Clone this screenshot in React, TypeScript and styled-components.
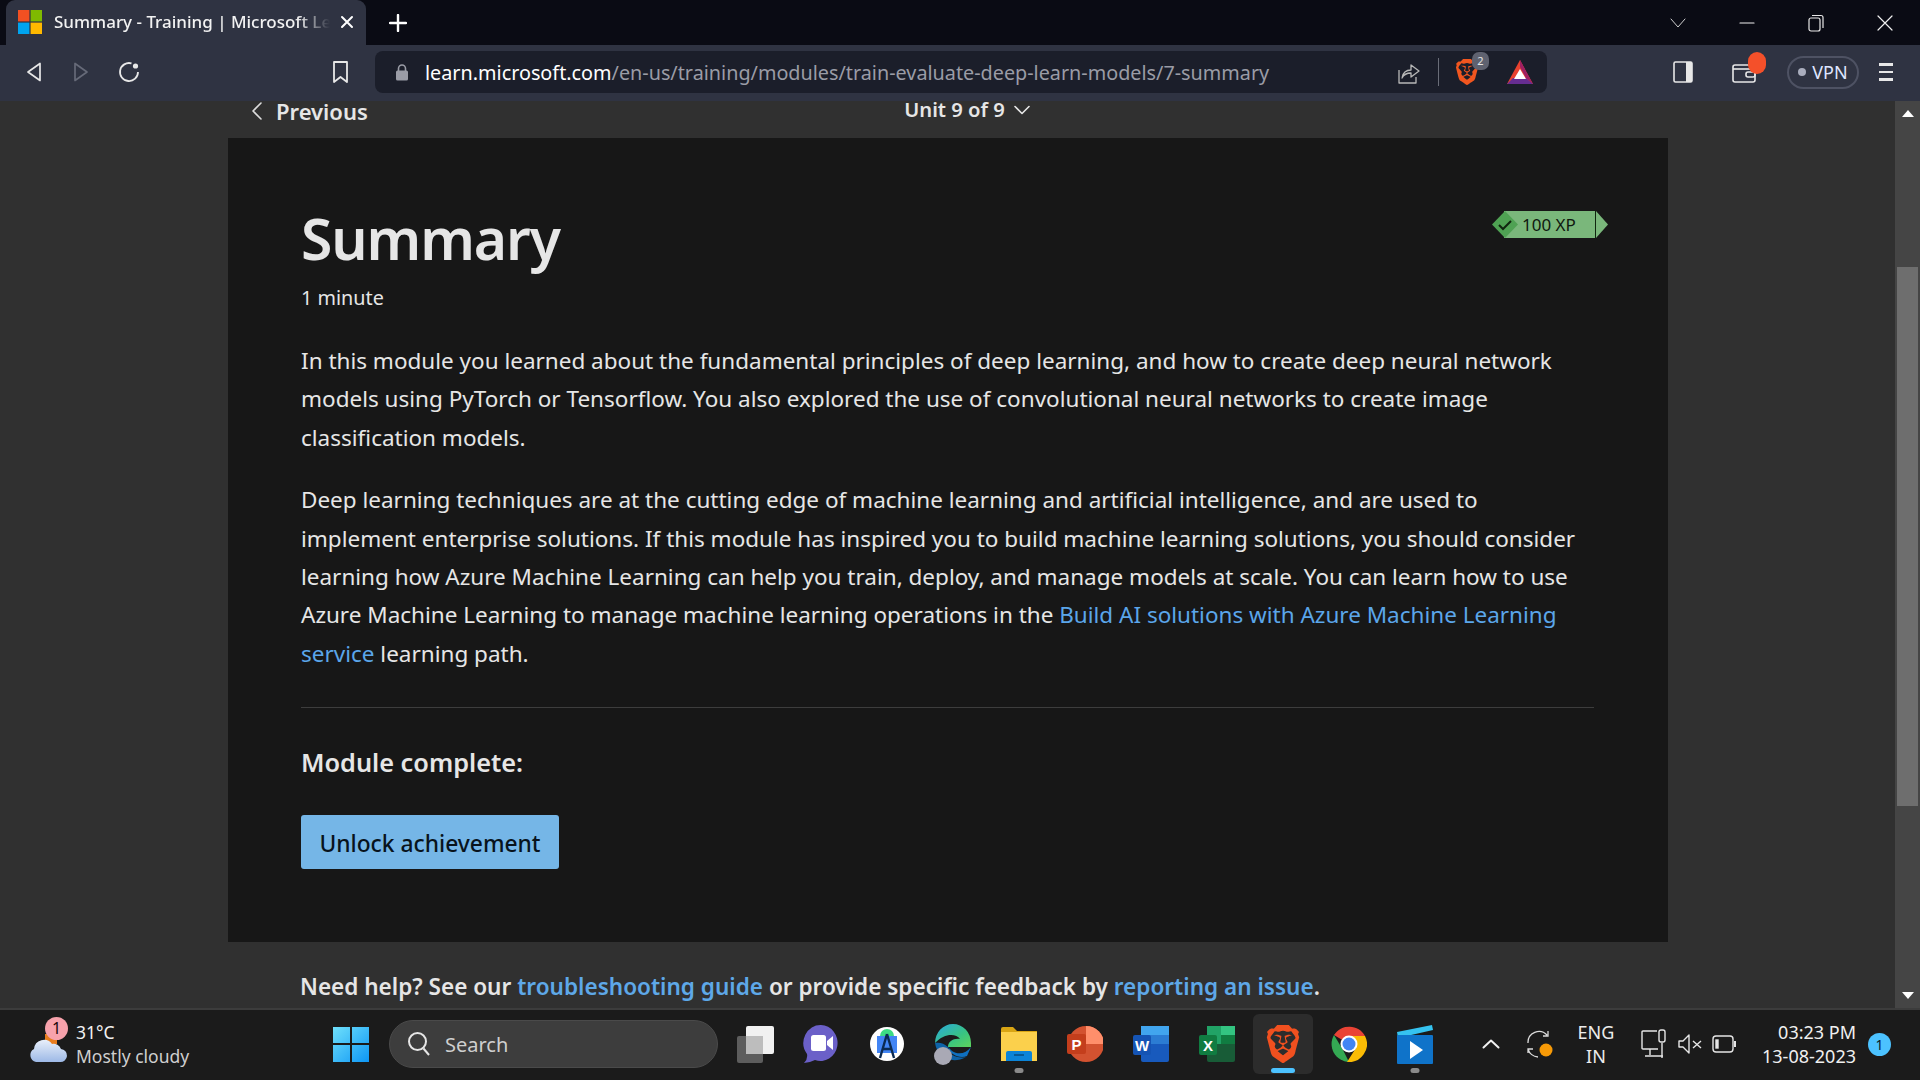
import { createGlobalStyle } from "styled-components";
import styled from "styled-components";
import { SiBrave } from "react-icons/si";

const GlobalStyle = createGlobalStyle`
	html, body {
		margin: 0;
		padding: 0;
		height: 100%;
		overflow: hidden;
		background: #303030;
	}
	* {
		box-sizing: border-box;
	}
`;

const FONT = `"Noto Sans", "Open Sans", "Liberation Sans", sans-serif`;

function Squares({ size, colors }: { size: number; colors: string[] }) {
	return (
		<svg width={size} height={size} viewBox="0 0 24 24">
			<rect x="0" y="0" width="11.4" height="11.4" fill={colors[0]} />
			<rect x="12.6" y="0" width="11.4" height="11.4" fill={colors[1]} />
			<rect x="0" y="12.6" width="11.4" height="11.4" fill={colors[2]} />
			<rect x="12.6" y="12.6" width="11.4" height="11.4" fill={colors[3]} />
		</svg>
	);
}

function Stroke({ w, h, d, color = "#e8e8e8", sw = 1.6, box }: { w: number; h: number; d: string; color?: string; sw?: number; box?: string }) {
	return (
		<svg width={w} height={h} viewBox={box ?? `0 0 ${w} ${h}`} fill="none" stroke={color} strokeWidth={sw} strokeLinejoin="round" strokeLinecap="round">
			<path d={d} />
		</svg>
	);
}

function App() {
	return (
		<Screen>
			<GlobalStyle />
			<TabStrip>
				<Tab>
					<Squares size={24} colors={["#f25022", "#7fba00", "#00a4ef", "#ffb900"]} />
					<TabTitle>Summary - Training | Microsoft Learn</TabTitle>
					<Stroke w={14} h={14} d="M2 2 L12 12 M12 2 L2 12" color="#fff" sw={2} />
				</Tab>
				<NewTab>
					<Stroke w={18} h={18} d="M9 1 V17 M1 9 H17" color="#fff" sw={2.4} />
				</NewTab>
				<WindowControls>
					<WindowButton>
						<Stroke w={16} h={10} d="M1 1 L8 9 L15 1" color="#cfcfcf" sw={1} />
					</WindowButton>
					<WindowButton>
						<Stroke w={16} h={4} d="M1 2 H15" color="#f0f0f0" sw={1.2} />
					</WindowButton>
					<WindowButton>
						<svg width="16" height="18" viewBox="0 0 16 18" fill="none" stroke="#e8e8e8" strokeWidth="1.2">
							<rect x="1" y="4" width="11" height="13" rx="2" />
							<path d="M4 1.5 H13 Q15 1.5 15 3.5 V14" />
						</svg>
					</WindowButton>
					<WindowButton>
						<Stroke w={16} h={16} d="M1 1 L15 15 M15 1 L1 15" color="#f0f0f0" sw={1.2} />
					</WindowButton>
				</WindowControls>
			</TabStrip>

			<Toolbar>
				<NavButton width={47}>
					<svg width="16" height="20" viewBox="0 0 16 20" fill="none" stroke="#e8e8e8" strokeWidth="1.7" strokeLinejoin="round">
						<path d="M14 1.5 V18.5 L2 10 Z" />
					</svg>
				</NavButton>
				<NavButton width={47}>
					<svg width="16" height="20" viewBox="0 0 16 20" fill="none" stroke="#666a78" strokeWidth="1.7" strokeLinejoin="round">
						<path d="M2 1.5 V18.5 L14 10 Z" />
					</svg>
				</NavButton>
				<NavButton width={50}>
					<svg width="22" height="22" viewBox="0 0 22 22" fill="none" stroke="#e8e8e8" strokeWidth="1.8">
						<path d="M13.5 2.4 A9 9 0 1 0 20 11" />
						<circle cx="17.5" cy="5" r="2.6" fill="#e8e8e8" stroke="none" />
					</svg>
				</NavButton>
				<BookmarkSlot>
					<svg width="17" height="24" viewBox="0 0 17 24" fill="none" stroke="#e8e8e8" strokeWidth="1.8" strokeLinejoin="round">
						<path d="M2 2 H15 V22 L8.5 17 L2 22 Z" />
					</svg>
				</BookmarkSlot>
				<UrlBar>
					<svg width="14" height="18" viewBox="0 0 14 18">
						<path d="M3.5 8 V5.5 A3.5 3.5 0 0 1 10.5 5.5 V8" fill="none" stroke="#9a9ca6" strokeWidth="1.6" />
						<rect x="1" y="7.5" width="12" height="10" rx="1.5" fill="#9a9ca6" />
					</svg>
					<UrlText>
						learn.microsoft.com<UrlPath>/en-us/training/modules/train-evaluate-deep-learn-models/7-summary</UrlPath>
					</UrlText>
					<UrlIcons>
						<svg width="24" height="26" viewBox="0 0 24 26" fill="none" stroke="#b8b8b8" strokeWidth="1.3" strokeLinejoin="round">
							<path d="M3 11 V24 H20 V18" />
							<path d="M6 19 C7 13 11 11 15 11 V6 L23 12 L15 18 V14 C11 14 8 15 6 19 Z" />
						</svg>
						<UrlDivider />
						<ShieldSlot>
							<SiBrave size={26} color="#f1561f" />
							<ShieldCount>2</ShieldCount>
						</ShieldSlot>
						<svg width="28" height="28" viewBox="0 0 28 28">
							<path d="M14 2 L27 26 H1 Z" fill="#e8412f" />
							<path d="M14 2 L27 26 L20 20 L14 9 Z" fill="#9e1f63" />
							<path d="M1 26 L7 20 H20 L27 26 Z" fill="#662d91" />
							<path d="M14 11 L20 21 H8 Z" fill="#fff" />
						</svg>
					</UrlIcons>
				</UrlBar>
				<ToolbarRight>
					<svg width="20" height="22" viewBox="0 0 20 22">
						<rect x="1" y="1" width="18" height="20" rx="1.5" fill="none" stroke="#e8e8e8" strokeWidth="1.6" />
						<rect x="13" y="1" width="6" height="20" fill="#e8e8e8" />
					</svg>
					<WalletSlot>
						<svg width="24" height="22" viewBox="0 0 24 22" fill="none" stroke="#e8e8e8" strokeWidth="1.6">
							<rect x="1" y="4" width="22" height="17" rx="2" />
							<path d="M1 8 H23" />
							<rect x="14" y="11" width="9" height="5" rx="2" />
						</svg>
						<WalletDot />
					</WalletSlot>
					<VpnPill>
						<VpnDot />
						VPN
					</VpnPill>
					<Hamburger>
						<span />
						<span />
						<span />
					</Hamburger>
				</ToolbarRight>
			</Toolbar>

			<Viewport>
				<Page>
					<UnitNav>
						<PrevLink>
							<Stroke w={12} h={18} d="M10 1 L2 9 L10 17" color="#dcdcdc" sw={1.6} />
							Previous
						</PrevLink>
						<UnitLabel>
							Unit 9 of 9
							<Stroke w={16} h={10} d="M1 1.5 L8 8.5 L15 1.5" color="#e6e6e6" sw={1.6} />
						</UnitLabel>
					</UnitNav>
					<Card>
						<CardHeader>
							<div>
								<Title>Summary</Title>
								<Duration>1 minute</Duration>
							</div>
							<XpBadge>
								<XpCheck>
									<svg width="28" height="27" viewBox="0 0 28 27">
										<path d="M12 0 H28 V27 H12 Z" fill="#7ab77b" />
										<path d="M13 0 L26 13.5 L13 27 L0 13.5 Z" fill="#4fa253" />
										<path d="M7 14 L11 18 L19 10" fill="none" stroke="#10260f" strokeWidth="2" />
									</svg>
								</XpCheck>
								<XpLabel>100 XP</XpLabel>
								<XpEnd>
									<svg width="12" height="27" viewBox="0 0 12 27">
										<path d="M0 0 L12 13.5 L0 27 Z" fill="#7ab77b" />
									</svg>
								</XpEnd>
							</XpBadge>
						</CardHeader>
						<Paragraph>
							In this module you learned about the fundamental principles of deep learning, and how to create deep neural network models using PyTorch or Tensorflow. You also explored the use of convolutional neural networks to create image classification models.
						</Paragraph>
						<Paragraph>
							Deep learning techniques are at the cutting edge of machine learning and artificial intelligence, and are used to implement enterprise solutions. If this module has inspired you to build machine learning solutions, you should consider learning how Azure Machine Learning can help you train, deploy, and manage models at scale. You can learn how to use Azure Machine Learning to manage machine learning operations in the{" "}
							<BodyLink>Build AI solutions with Azure Machine Learning service</BodyLink> learning path.
						</Paragraph>
						<Rule />
						<CompleteTitle>Module complete:</CompleteTitle>
						<UnlockButton>Unlock achievement</UnlockButton>
					</Card>
					<HelpLine>
						Need help? See our <HelpLink>troubleshooting guide</HelpLink> or provide specific feedback by <HelpLink>reporting an issue</HelpLink>.
					</HelpLine>
				</Page>
				<Scrollbar>
					<ScrollArrow>
						<svg width="12" height="7" viewBox="0 0 12 7">
							<path d="M0 7 L6 0 L12 7 Z" fill="#fff" />
						</svg>
					</ScrollArrow>
					<ScrollTrack>
						<ScrollThumb />
					</ScrollTrack>
					<ScrollArrow>
						<svg width="12" height="7" viewBox="0 0 12 7">
							<path d="M0 0 L6 7 L12 0 Z" fill="#fff" />
						</svg>
					</ScrollArrow>
				</Scrollbar>
			</Viewport>

			<Taskbar>
				<Weather>
					<WeatherIcon>
						<svg width="40" height="34" viewBox="0 0 40 34">
							<defs>
								<linearGradient id="cloud" x1="0" y1="0" x2="0" y2="1">
									<stop offset="0" stopColor="#e8effa" />
									<stop offset="1" stopColor="#9db9e6" />
								</linearGradient>
							</defs>
							<rect x="17" y="4" width="12" height="10" fill="#e87d1e" />
							<path d="M8 32 A7 7 0 0 1 6 19 A10 10 0 0 1 24 14 A8 8 0 0 1 33 19 A6.5 6.5 0 0 1 32 32 Z" fill="url(#cloud)" />
						</svg>
						<WeatherBadge>1</WeatherBadge>
					</WeatherIcon>
					<WeatherText>
						<span>31°C</span>
						<WeatherSub>Mostly cloudy</WeatherSub>
					</WeatherText>
				</Weather>
				<StartButton>
					<svg width="36" height="36" viewBox="0 0 36 36">
						<defs>
							<linearGradient id="win" x1="0" y1="0" x2="1" y2="1">
								<stop offset="0" stopColor="#6fe0fb" />
								<stop offset="1" stopColor="#0d96f5" />
							</linearGradient>
						</defs>
						<path d="M0 1 H17 V17 H0 Z M19 1 H36 V17 H19 Z M0 19 H17 V36 H0 Z M19 19 H36 V36 H19 Z" fill="url(#win)" />
					</svg>
				</StartButton>
				<SearchBox>
					<svg width="24" height="26" viewBox="0 0 24 26" fill="none" stroke="#e6e6e6" strokeWidth="2">
						<circle cx="10.5" cy="10.5" r="8.5" />
						<path d="M16.5 17.5 L22 24" />
					</svg>
					<SearchLabel>Search</SearchLabel>
				</SearchBox>
				<TaskIcon>
					<svg width="42" height="38" viewBox="0 0 42 38">
						<rect x="3" y="11" width="26" height="27" rx="2" fill="#5d5d5d" />
						<rect x="12" y="1" width="28" height="28" rx="2" fill="#f1f1f1" />
						<rect x="12" y="11" width="17" height="18" fill="#bdbdbd" />
					</svg>
				</TaskIcon>
				<TaskIcon>
					<svg width="36" height="40" viewBox="0 0 36 40">
						<path d="M18 1 A17 18 0 1 1 12 36 Q6 39 1 39 Q5 35 4 30 A17 18 0 0 1 18 1 Z" fill="#6b60c8" />
						<rect x="8" y="11" width="15" height="16" rx="2.5" fill="#fff" />
						<path d="M24 17 L30 12 V26 L24 21 Z" fill="#fff" />
					</svg>
				</TaskIcon>
				<TaskIcon>
					<svg width="34" height="38" viewBox="0 0 34 38">
						<circle cx="17" cy="19" r="17" fill="#fff" />
						<path d="M10 11 A7 7 0 0 1 24 11 Z" fill="#3ddc84" />
						<rect x="7" y="11" width="20" height="17" fill="#4285f4" />
						<path d="M17 9 L10 33 M17 9 L24 33 M12 24 H22" stroke="#0b2a52" strokeWidth="2.4" fill="none" />
					</svg>
				</TaskIcon>
				<TaskIcon>
					<svg width="38" height="42" viewBox="0 0 38 42">
						<defs>
							<linearGradient id="edge" x1="0" y1="0" x2="1" y2="1">
								<stop offset="0" stopColor="#2aa9e0" />
								<stop offset="0.6" stopColor="#39c481" />
								<stop offset="1" stopColor="#5ed35c" />
							</linearGradient>
						</defs>
						<path d="M1 20 A18 19 0 0 1 37 20 V24 H14 C14 18 20 15 26 16 C22 10 10 10 1 20 Z" fill="url(#edge)" />
						<path d="M1 20 C3 34 18 42 32 34 C24 36 14 32 14 24 C10 20 5 19 1 20 Z" fill="#0e63a8" />
						<path d="M14 24 C16 32 26 36 33 33 L37 24 C32 31 24 32 18 28 Z" fill="#0f70c0" />
						<circle cx="9" cy="33" r="9" fill="#a9a9b5" />
					</svg>
				</TaskIcon>
				<TaskIcon marker>
					<svg width="38" height="36" viewBox="0 0 38 36">
						<path d="M1 3 Q1 1 3 1 H13 L17 5 H37 V35 H1 Z" fill="#d9a514" />
						<rect x="1" y="6" width="36" height="29" fill="#fbd04c" />
						<path d="M6 35 V27 Q6 25 8 25 H30 Q32 25 32 27 V35 Z" fill="#0b84d8" />
						<rect x="14" y="28" width="10" height="2" fill="#075a96" />
					</svg>
				</TaskIcon>
				<TaskIcon>
					<svg width="36" height="38" viewBox="0 0 36 38">
						<circle cx="19" cy="19" r="18" fill="#d35230" />
						<path d="M19 1 A18 18 0 0 1 37 19 H19 Z" fill="#ff8f6b" />
						<rect x="0" y="9" width="19" height="20" rx="2" fill="#c43e1c" />
						<OfficeLetter x="9.5" y="25">P</OfficeLetter>
					</svg>
				</TaskIcon>
				<TaskIcon>
					<svg width="36" height="38" viewBox="0 0 36 38">
						<rect x="8" y="1" width="28" height="36" rx="2" fill="#185abd" />
						<rect x="8" y="1" width="28" height="9" fill="#41a5ee" />
						<rect x="8" y="10" width="28" height="9" fill="#2b7cd3" />
						<rect x="0" y="10" width="18" height="20" rx="2" fill="#1554b4" />
						<OfficeLetter x="9" y="26">W</OfficeLetter>
					</svg>
				</TaskIcon>
				<TaskIcon>
					<svg width="36" height="38" viewBox="0 0 36 38">
						<rect x="8" y="1" width="28" height="36" rx="2" fill="#185c37" />
						<rect x="8" y="1" width="28" height="9" fill="#21a366" />
						<rect x="22" y="1" width="14" height="9" fill="#33c481" />
						<rect x="8" y="10" width="28" height="9" fill="#21a366" />
						<rect x="22" y="10" width="14" height="9" fill="#107c41" />
						<rect x="0" y="10" width="18" height="20" rx="2" fill="#107c41" />
						<OfficeLetter x="9" y="26">X</OfficeLetter>
					</svg>
				</TaskIcon>
				<TaskIcon active>
					<SiBrave size={38} color="#f1501f" />
				</TaskIcon>
				<TaskIcon>
					<svg width="36" height="36" viewBox="0 0 36 36">
						<path d="M18 18 L3 9 A18 18 0 0 1 34 10 H18 Z" fill="#ea4335" />
						<path d="M18 36 A18 18 0 0 1 3 9 L12 24 Z" fill="#34a853" />
						<path d="M34 10 A18 18 0 0 1 16 36 L25 22 L18 10 Z" fill="#fbbc05" />
						<circle cx="18" cy="18" r="8.5" fill="#fff" />
						<circle cx="18" cy="18" r="6.5" fill="#4285f4" />
					</svg>
				</TaskIcon>
				<TaskIcon marker>
					<svg width="36" height="40" viewBox="0 0 36 40">
						<path d="M0 8 L35 1 L36 6 L1 14 Z" fill="#35c3f0" />
						<rect x="0" y="11" width="36" height="29" rx="1" fill="#0f73c9" />
						<path d="M13 17 L26 26 L13 35 Z" fill="#fff" />
					</svg>
				</TaskIcon>
				<Tray>
					<TraySlot width={52}>
						<Stroke w={18} h={10} d="M1.5 8.5 L9 1.5 L16.5 8.5" color="#f0f0f0" sw={2} />
					</TraySlot>
					<TraySlot width={46}>
						<svg width="28" height="28" viewBox="0 0 28 28" fill="none" stroke="#dcdcdc" strokeWidth="1.3">
							<path d="M2 13 A11 11 0 0 1 21 5 M17 6 H22 V1" />
							<path d="M2 23 V19 H7 M2 19 A11 11 0 0 0 12 27" />
							<circle cx="20" cy="20" r="6.5" fill="#f79a07" stroke="none" />
						</svg>
					</TraySlot>
					<LangBlock>
						<span>ENG</span>
						<span>IN</span>
					</LangBlock>
					<TraySlot width={39}>
						<svg width="26" height="30" viewBox="0 0 26 30" fill="none" stroke="#e6e6e6" strokeWidth="1.4">
							<path d="M17 20 H2 Q1 20 1 19 V3 Q1 2 2 2 H16" />
							<path d="M9 20 V26 M4 27 H22 M21 14 V29" />
							<rect x="18" y="1" width="6" height="12" rx="2" />
						</svg>
					</TraySlot>
					<TraySlot width={33}>
						<svg width="24" height="20" viewBox="0 0 24 20" fill="none" stroke="#e6e6e6" strokeWidth="1.4" strokeLinejoin="round">
							<path d="M1 7 H5 L11 1 V19 L5 13 H1 Z" />
							<path d="M15 7 L23 14 M23 7 L15 14" />
						</svg>
					</TraySlot>
					<TraySlot width={36}>
						<svg width="24" height="18" viewBox="0 0 24 18" fill="none" stroke="#e6e6e6" strokeWidth="1.4">
							<rect x="1" y="1" width="20" height="16" rx="3" />
							<rect x="4" y="5" width="2" height="8" fill="#e6e6e6" />
							<path d="M23 6 V12" strokeWidth="2" />
						</svg>
					</TraySlot>
					<Clock>
						<span>03:23 PM</span>
						<span>13-08-2023</span>
					</Clock>
					<NotifyBadge>1</NotifyBadge>
				</Tray>
			</Taskbar>
		</Screen>
	);
}

export default App;

const Screen = styled.div`
	width: 1920px;
	height: 1080px;
	display: flex;
	flex-direction: column;
	overflow: hidden;
	font-family: ${FONT};
	color: #e6e6e6;
`;

const TabStrip = styled.div`
	height: 45px;
	flex: none;
	display: flex;
	align-items: flex-end;
	padding-left: 6px;
	background: #0a0b14;
`;

const Tab = styled.div`
	width: 360px;
	height: 45px;
	display: flex;
	align-items: center;
	padding: 0 12px 2px;
	background: #2f3342;
	border-radius: 9px 9px 0 0;
`;

const TabTitle = styled.span`
	flex: 1;
	margin: 0 10px 0 12px;
	overflow: hidden;
	white-space: nowrap;
	font-size: 17px;
	font-weight: 500;
	color: #f2f2f2;
	-webkit-mask-image: linear-gradient(to right, #000 88%, transparent);
	mask-image: linear-gradient(to right, #000 88%, transparent);
`;

const NewTab = styled.div`
	width: 64px;
	height: 45px;
	display: flex;
	align-items: center;
	justify-content: center;
`;

const WindowControls = styled.div`
	margin-left: auto;
	height: 45px;
	display: flex;
	align-items: center;
	padding-right: 1px;
`;

const WindowButton = styled.div`
	width: 69px;
	display: flex;
	justify-content: center;
`;

const Toolbar = styled.div`
	height: 56px;
	flex: none;
	display: flex;
	align-items: center;
	padding: 0 0 0 10px;
	background: #2f3342;
`;

const NavButton = styled.div<{ width: number }>`
	width: ${({ width }) => width}px;
	margin-bottom: 2px;
	display: flex;
	justify-content: center;
`;

const BookmarkSlot = styled.div`
	width: 42px;
	margin: 0 14px 2px 165px;
	display: flex;
	justify-content: center;
`;

const UrlBar = styled.div`
	width: 1172px;
	height: 42px;
	margin-bottom: 2px;
	display: flex;
	align-items: center;
	padding: 0 13px 0 20px;
	background: #1b1e2a;
	border-radius: 8px;
`;

const UrlText = styled.span`
	margin-left: 16px;
	font-size: 19.8px;
	white-space: nowrap;
	color: #fff;
`;

const UrlPath = styled.span`
	color: #9a9ca6;
`;

const UrlIcons = styled.div`
	margin-left: auto;
	display: flex;
	align-items: center;
`;

const UrlDivider = styled.div`
	width: 1px;
	height: 28px;
	margin: 0 15px 0 18px;
	background: #6a6d78;
`;

const ShieldSlot = styled.div`
	position: relative;
	display: flex;
	margin-right: 26px;
`;

const ShieldCount = styled.span`
	position: absolute;
	top: -7px;
	right: -9px;
	width: 17px;
	height: 18px;
	border-radius: 7px;
	background: #5f6270;
	font-size: 11px;
	line-height: 18px;
	text-align: center;
	color: #e6e6e6;
`;

const ToolbarRight = styled.div`
	flex: 1;
	margin-bottom: 2px;
	display: flex;
	align-items: center;
	padding-left: 126px;
`;

const WalletSlot = styled.div`
	position: relative;
	display: flex;
	margin-left: 39px;
	margin-right: 31px;
`;

const WalletDot = styled.span`
	position: absolute;
	top: -9px;
	right: -10px;
	width: 18px;
	height: 22px;
	border-radius: 9px;
	background: #f4502a;
`;

const VpnPill = styled.div`
	width: 72px;
	height: 33px;
	display: flex;
	align-items: center;
	justify-content: center;
	gap: 6px;
	border: 2px solid #4e5263;
	border-radius: 17px;
	font-size: 18px;
	color: #dfe6ff;
`;

const VpnDot = styled.span`
	width: 8px;
	height: 8px;
	border-radius: 50%;
	background: #a9adbd;
`;

const Hamburger = styled.div`
	margin-left: 20px;
	width: 14px;
	display: flex;
	flex-direction: column;
	gap: 5px;

	span {
		height: 2.5px;
		background: #e8e8e8;
	}
`;

const Viewport = styled.div`
	flex: 1;
	min-height: 0;
	display: flex;
	background: #303030;
`;

const Page = styled.main`
	flex: 1;
	min-width: 0;
	overflow: hidden;
	padding-left: 228px;
`;

const UnitNav = styled.div`
	position: relative;
	width: 1440px;
	height: 37px;
	padding-left: 38px;
	display: flex;
	align-items: flex-start;
	justify-content: center;
`;

const PrevLink = styled.span`
	position: absolute;
	left: 23px;
	top: 0;
	display: flex;
	align-items: center;
	gap: 13px;
	font-size: 22px;
	font-weight: 600;
	line-height: 20px;
	color: #e6e6e6;
`;

const UnitLabel = styled.span`
	display: flex;
	align-items: center;
	gap: 9px;
	font-size: 20.2px;
	font-weight: 600;
	line-height: 17px;
`;

const Card = styled.section`
	width: 1440px;
	height: 804px;
	padding: 64px 74px 0 73px;
	background: #171717;
`;

const CardHeader = styled.header`
	display: flex;
	justify-content: space-between;
	align-items: flex-start;
	margin-bottom: 30px;
`;

const Title = styled.h1`
	margin: 0;
	font-size: 57px;
	font-weight: 600;
	letter-spacing: -1.1px;
	line-height: 72px;
	color: #e6e6e6;
`;

const Duration = styled.div`
	margin-top: 10px;
	font-size: 19.8px;
	line-height: 28px;
`;

const XpBadge = styled.div`
	display: flex;
	height: 27px;
	margin-top: 9px;
	margin-right: -14px;
`;

const XpCheck = styled.div`
	display: flex;
`;

const XpLabel = styled.div`
	width: 75px;
	padding-left: 2px;
	background: #7ab77b;
	font-size: 17px;
	line-height: 27px;
	color: #10180f;
	white-space: nowrap;
`;

const XpEnd = styled.div`
	display: flex;
	border-left: 1.5px solid #10260f;
`;

const Paragraph = styled.p`
	margin: 0 0 24px;
	font-size: 22.5px;
	line-height: 38.4px;
	color: #e6e6e6;
`;

const BodyLink = styled.span`
	color: #5ba6ea;
`;

const Rule = styled.hr`
	margin: 34px 0 0;
	border: none;
	border-top: 1px solid #3d3d3d;
`;

const CompleteTitle = styled.h2`
	margin: 36px 0 0;
	font-size: 25.3px;
	font-weight: 600;
	line-height: 36px;
	color: #e6e6e6;
`;

const UnlockButton = styled.button`
	display: block;
	width: 258px;
	height: 54px;
	margin-top: 35px;
	padding: 2px 0 0;
	border: none;
	border-radius: 3px;
	background: #75b6e7;
	font-family: inherit;
	font-size: 22.8px;
	font-weight: 500;
	color: #08131c;
`;

const HelpLine = styled.div`
	width: 1440px;
	margin-top: 27px;
	padding-left: 72px;
	font-size: 22.55px;
	font-weight: 600;
	line-height: 36px;
	white-space: nowrap;
`;

const HelpLink = styled.span`
	color: #5ea8e8;
`;

const Scrollbar = styled.div`
	width: 25px;
	flex: none;
	display: flex;
	flex-direction: column;
	background: #454545;
`;

const ScrollArrow = styled.div`
	height: 25px;
	flex: none;
	display: flex;
	align-items: center;
	justify-content: center;
`;

const ScrollTrack = styled.div`
	flex: 1;
	padding: 141px 2px 0;
`;

const ScrollThumb = styled.div`
	height: 539px;
	background: #6e6e6e;
`;

const Taskbar = styled.footer`
	height: 72px;
	flex: none;
	display: flex;
	align-items: center;
	padding-bottom: 2px;
	border-top: 2px solid #3c3c3c;
	background: #1b1b1b;
`;

const Weather = styled.div`
	width: 318px;
	display: flex;
	align-items: center;
	padding-left: 28px;
`;

const WeatherIcon = styled.div`
	position: relative;
	width: 48px;
	display: flex;
	padding-top: 6px;
`;

const WeatherBadge = styled.span`
	position: absolute;
	top: -7px;
	left: 17px;
	width: 23px;
	height: 23px;
	border-radius: 50%;
	background: #f7a2ac;
	font-size: 16px;
	line-height: 23px;
	text-align: center;
	color: #20090c;
`;

const WeatherText = styled.div`
	display: flex;
	flex-direction: column;
	font-size: 17.5px;
	line-height: 24px;
	color: #f2f2f2;
`;

const WeatherSub = styled.span`
	color: #cfcfcf;
`;

const StartButton = styled.div`
	width: 66px;
	display: flex;
	justify-content: center;
`;

const SearchBox = styled.div`
	width: 329px;
	height: 48px;
	margin: 0 4px 0 5px;
	display: flex;
	align-items: center;
	gap: 14px;
	padding-left: 17px;
	background: #3d3d3d;
	border: 1px solid #4a4a4a;
	border-radius: 24px;
`;

const SearchLabel = styled.span`
	font-size: 20px;
	color: #cfcfcf;
`;

const TaskIcon = styled.div<{ active?: boolean; marker?: boolean }>`
	position: relative;
	width: 60px;
	height: 60px;
	margin: 0 3px;
	display: flex;
	align-items: center;
	justify-content: center;
	border-radius: 6px;
	background: ${({ active }) => (active ? "#2c2c2c" : "transparent")};

	&::after {
		content: "";
		display: ${({ active, marker }) => (active || marker ? "block" : "none")};
		position: absolute;
		left: 50%;
		bottom: 1px;
		width: ${({ active }) => (active ? "24px" : "9px")};
		height: 5px;
		border-radius: 3px;
		transform: translateX(-50%);
		background: ${({ active }) => (active ? "#4cc2ff" : "#8a8a8a")};
	}
`;

const OfficeLetter = styled.text`
	font-family: "Liberation Sans", sans-serif;
	font-size: 15px;
	font-weight: 700;
	fill: #fff;
	text-anchor: middle;
`;

const Tray = styled.div`
	flex: 1;
	display: flex;
	align-items: center;
	padding-left: 17px;
`;

const TraySlot = styled.div<{ width: number }>`
	width: ${({ width }) => width}px;
	display: flex;
	justify-content: center;
`;

const LangBlock = styled.div`
	width: 66px;
	margin-right: 5px;
	display: flex;
	flex-direction: column;
	align-items: center;
	font-size: 18px;
	line-height: 24px;
	color: #ececec;
`;

const Clock = styled.div`
	width: 114px;
	display: flex;
	flex-direction: column;
	align-items: flex-end;
	font-size: 18px;
	line-height: 24px;
	color: #f0f0f0;
`;

const NotifyBadge = styled.span`
	width: 23px;
	height: 23px;
	margin-left: 12px;
	border-radius: 50%;
	background: #4cc2ff;
	font-size: 14px;
	line-height: 23px;
	text-align: center;
	color: #0a1a24;
`;
